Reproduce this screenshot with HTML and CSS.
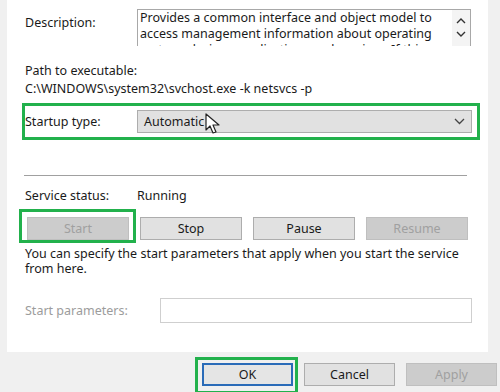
FILE: index.html
```html
<!DOCTYPE html>
<html lang="en">
<head>
    <meta charset="UTF-8">
    <title>Service Properties</title>
    <link rel="stylesheet" href="styles.css">
</head>
<body>
    <div class="dialog">
        <div class="panel">
            <div class="row desc-row">
                <span class="label">Description:</span>
                <div class="desc-box">
                    <div class="desc-text">Provides a common interface and object model to access management information about operating system, devices, applications and services. If this</div>
                    <div class="scroller">
                        <svg width="10" height="7" viewBox="0 0 10 7"><path d="M1 6 L5 2 L9 6" fill="none" stroke="#333" stroke-width="1.4"/></svg>
                        <svg width="10" height="7" viewBox="0 0 10 7"><path d="M1 1 L5 5 L9 1" fill="none" stroke="#333" stroke-width="1.4"/></svg>
                    </div>
                </div>
            </div>

            <div class="path">
                <div>Path to executable:</div>
                <div>C:\WINDOWS\system32\svchost.exe -k netsvcs -p</div>
            </div>

            <div class="row startup-row">
                <span class="label">Startup type:</span>
                <div class="select">
                    <span>Automatic</span>
                    <svg width="11" height="7" viewBox="0 0 11 7"><path d="M1 1 L5.5 5.5 L10 1" fill="none" stroke="#444" stroke-width="1.3"/></svg>
                </div>
                <svg class="cursor" width="16" height="22" viewBox="0 0 16 22">
                    <path d="M1 1 L1 17 L5 13 L8 20 L11 19 L8 12 L14 12 Z" fill="#fff" stroke="#222" stroke-width="1.2" stroke-linejoin="round"/>
                </svg>
                <div class="mark mark-startup"></div>
            </div>

            <hr class="sep">

            <div class="row status-row">
                <span class="label">Service status:</span>
                <span>Running</span>
            </div>

            <div class="buttons">
                <button class="btn" disabled>Start</button>
                <button class="btn">Stop</button>
                <button class="btn">Pause</button>
                <button class="btn" disabled>Resume</button>
                <div class="mark mark-start"></div>
            </div>

            <p class="hint">You can specify the start parameters that apply when you start the service from here.</p>

            <div class="row params-row">
                <span class="label muted">Start parameters:</span>
                <div class="input"></div>
            </div>
        </div>

        <div class="footer">
            <div class="ok-wrap">
                <button class="btn btn-foot btn-default">OK</button>
                <div class="mark mark-ok"></div>
            </div>
            <button class="btn btn-foot">Cancel</button>
            <button class="btn btn-foot" disabled>Apply</button>
        </div>
    </div>
</body>
</html>
```

FILE: styles.css
```css
body {
    margin: 0;
    background-color: #f0f0f0;
    font-family: 'Noto Sans', 'Open Sans', sans-serif;
    font-size: 12.5px;
    color: #1a1a1a;
}

.dialog {
    width: 500px;
    height: 392px;
    overflow: hidden;
}

.panel {
    position: relative;
    margin-left: 7px;
    width: 481px;
    height: 352px;
    padding: 0 0 0 18px;
    background-color: #fff;
    box-sizing: border-box;
}

.row {
    display: flex;
    align-items: center;
}

.label {
    width: 112px;
    flex-shrink: 0;
}

.muted {
    color: #9c9c9c;
}

/* description */
.desc-row {
    align-items: flex-start;
    padding-top: 9px;
}

.desc-row .label {
    padding-top: 5px;
}

.desc-box {
    display: flex;
    width: 334px;
    height: 37px;
    border: 1px solid #a8a8a8;
    border-bottom: none;
    overflow: hidden;
    box-sizing: border-box;
}

.desc-text {
    flex: 1;
    padding: 0 0 0 2px;
    line-height: 16px;
}

.scroller {
    width: 18px;
    display: flex;
    flex-direction: column;
    align-items: center;
    gap: 7px;
    padding-top: 7px;
    background-color: #f4f4f4;
}

.path {
    margin-top: 16px;
    line-height: 18px;
}

/* startup type */
.startup-row {
    position: relative;
    margin-top: 12px;
    height: 23px;
}

.select {
    display: flex;
    align-items: center;
    justify-content: space-between;
    width: 335px;
    height: 23px;
    padding: 0 6px;
    background-color: #e1e1e1;
    border: 1px solid #adadad;
    box-sizing: border-box;
}

.cursor {
    position: absolute;
    left: 180px;
    top: 3px;
}

.mark {
    position: absolute;
    border: 3px solid #22b14c;
    box-sizing: border-box;
}

.mark-startup {
    left: -3px;
    top: -7px;
    width: 458px;
    height: 37px;
}

.sep {
    margin: 42px 0 0 -1px;
    width: 443px;
    border: none;
    border-top: 1px solid #a0a0a0;
    height: 0;
}

.status-row {
    margin-top: 10px;
    height: 18px;
}

/* action buttons */
.buttons {
    position: relative;
    display: flex;
    gap: 11px;
    margin-top: 13px;
    padding-left: 2px;
}

.btn {
    width: 102px;
    height: 23px;
    padding: 0;
    background-color: #e1e1e1;
    border: 1px solid #adadad;
    font-family: inherit;
    font-size: 12.5px;
    color: #1a1a1a;
}

.btn:disabled {
    background-color: #cccccc;
    border-color: #bfbfbf;
    color: #a0a0a0;
}

.mark-start {
    left: -6px;
    top: -8px;
    width: 117px;
    height: 34px;
}

.hint {
    margin: 6px 0 0;
    line-height: 15px;
    width: 450px;
}

.params-row {
    margin-top: 22px;
}

.params-row .label {
    width: 135px;
}

.input {
    width: 312px;
    height: 25px;
    border: 1px solid #cfcfcf;
    box-sizing: border-box;
}

/* footer */
.footer {
    display: flex;
    gap: 11px;
    padding: 11px 0 0 202px;
}

.btn-foot {
    width: 91px;
    height: 23px;
}

.btn-default {
    background-color: #e5e5e5;
    border: 2px solid #2a6bb8;
}

.ok-wrap {
    position: relative;
}

.mark-ok {
    left: -7px;
    top: -6px;
    width: 103px;
    height: 37px;
}
```
